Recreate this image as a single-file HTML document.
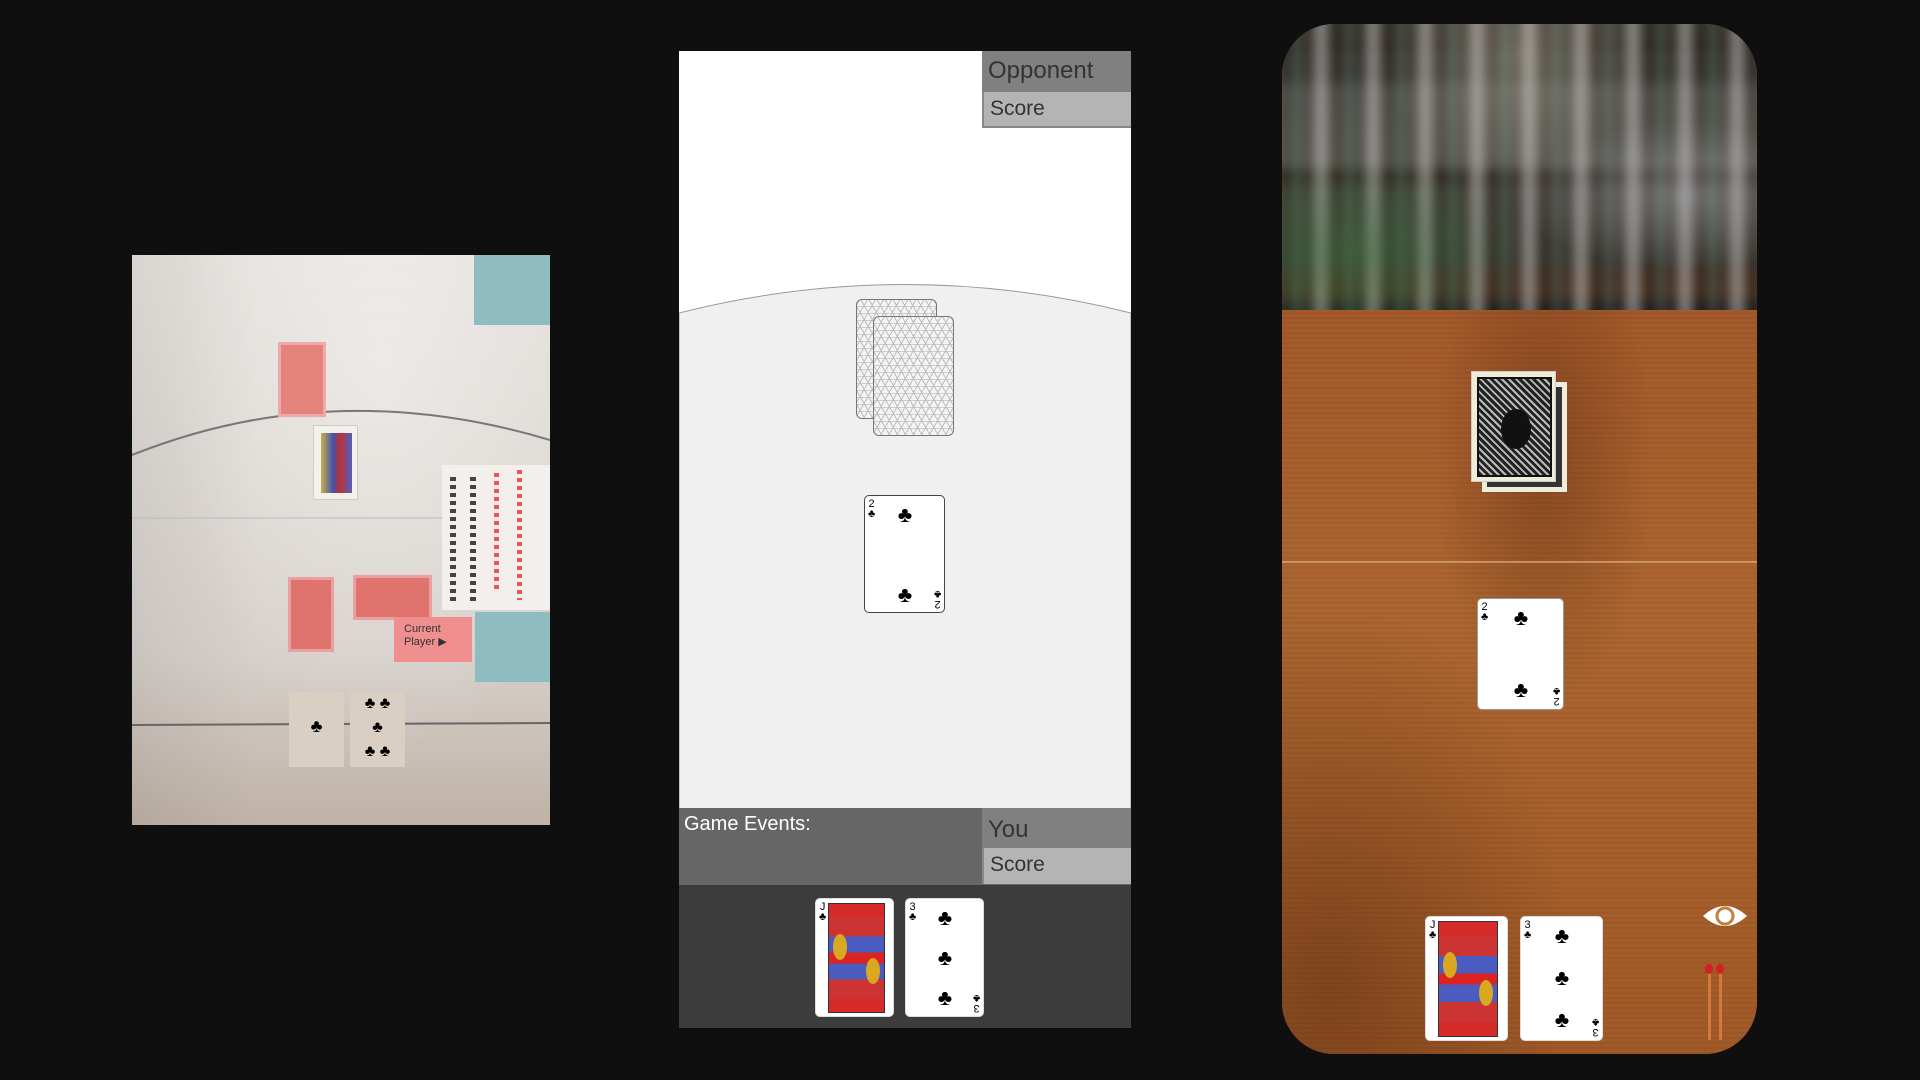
<!DOCTYPE html>
<html><head><meta charset="utf-8"><style>
*{margin:0;padding:0;box-sizing:border-box}
body{width:1920px;height:1080px;background:#0f0f10;position:relative;overflow:hidden;font-family:"Liberation Sans",sans-serif}
.a{position:absolute}
.card{position:absolute;background:#fff;border:1.5px solid #444;border-radius:5px;overflow:hidden}
.pip{position:absolute;font-size:22px;line-height:1;color:#000;transform:translateX(-50%)}
.idx{position:absolute;font-size:11px;line-height:10px;color:#000;text-align:center}
.back{position:absolute;border:1.5px solid #777;border-radius:6px;background:#f4f4f4;
background-image:repeating-linear-gradient(60deg,transparent 0 6px,#bbb 6px 7px),repeating-linear-gradient(-60deg,transparent 0 6px,#bbb 6px 7px),repeating-linear-gradient(0deg,transparent 0 6px,#ccc 6px 7px)}
</style></head><body>

<!-- LEFT: paper prototype photo -->
<div class="a" style="left:132px;top:255px;width:418px;height:570px;overflow:hidden;background:linear-gradient(180deg,#e6e2de 0%,#ded9d4 40%,#d6d0cb 70%,#bfb2a6 100%)">
  <div class="a" style="left:0;top:0;width:418px;height:570px;background:radial-gradient(ellipse at 60% 20%,rgba(255,255,255,.35),transparent 60%),linear-gradient(90deg,rgba(0,0,0,.06),transparent 30%)"></div>
  <svg class="a" style="left:0;top:0" width="418" height="570"><path d="M0 200 Q 200 120 418 185" fill="none" stroke="#777" stroke-width="2"/><line x1="0" y1="263" x2="418" y2="263" stroke="#bbb" stroke-width="1"/><line x1="0" y1="470" x2="418" y2="468" stroke="#666" stroke-width="2"/></svg>
  <div class="a" style="left:342px;top:0;width:76px;height:70px;background:#8fbcc0"></div>
  <div class="a" style="left:146px;top:87px;width:48px;height:75px;background:#e4837c;border:3px solid #eaa"></div>
  <div class="a" style="left:181px;top:170px;width:45px;height:75px;background:#f4f0ea;border:1px solid #ccc"><div class="a" style="left:7px;top:7px;width:31px;height:60px;background:linear-gradient(90deg,#c9b04a,#4050b0 40%,#c03030 60%,#5060c0)"></div></div>
  <div class="a" style="left:156px;top:322px;width:46px;height:75px;background:#e0736e;border:3px solid #e9a0a0"></div>
  <div class="a" style="left:221px;top:320px;width:79px;height:45px;background:#e0736e;border:3px solid #e9a0a0"></div>
  <div class="a" style="left:310px;top:210px;width:108px;height:145px;background:#f2efec"></div>
  <div class="a" style="left:318px;top:222px;width:6px;height:125px;background:repeating-linear-gradient(180deg,#444 0 4px,transparent 4px 8px)"></div>
  <div class="a" style="left:338px;top:222px;width:6px;height:125px;background:repeating-linear-gradient(180deg,#444 0 4px,transparent 4px 8px)"></div>
  <div class="a" style="left:362px;top:218px;width:5px;height:120px;background:repeating-linear-gradient(180deg,#e55 0 4px,transparent 4px 8px)"></div>
  <div class="a" style="left:385px;top:215px;width:5px;height:130px;background:repeating-linear-gradient(180deg,#e55 0 4px,transparent 4px 8px)"></div>
  <div class="a" style="left:262px;top:362px;width:78px;height:45px;background:#ef8f8f;font-size:11px;color:#333;padding:6px 0 0 10px">Current<br>Player ▶</div>
  <div class="a" style="left:343px;top:357px;width:75px;height:70px;background:#8fbcc0"></div>
  <div class="a" style="left:157px;top:437px;width:55px;height:75px;background:#d9cfc3;font-size:18px;text-align:center;padding-top:24px">♣</div>
  <div class="a" style="left:218px;top:437px;width:55px;height:75px;background:#d9cfc3;font-size:16px;text-align:center;line-height:24px">♣ ♣<br>♣<br>♣ ♣</div>
</div>

<!-- MIDDLE -->
<div class="a" style="left:679px;top:51px;width:452px;height:977px;background:#fff;overflow:hidden">
  <svg class="a" style="left:0;top:0" width="452" height="760"><path d="M0 262 Q 226 205 452 262 L452 760 L0 760Z" fill="#f0f0f0" stroke="#999" stroke-width="1"/></svg>
  <div class="a" style="left:303px;top:0;width:149px;height:41px;background:#808080;color:#333;font-size:24px;padding:6px 0 0 6px">Opponent</div>
  <div class="a" style="left:303px;top:41px;width:149px;height:36px;background:#b4b4b4;color:#333;font-size:21px;padding:5px 0 0 6px;border-left:2px solid #888;border-bottom:2px solid #888">Score</div>
  <div class="back" style="left:177px;top:248px;width:81px;height:120px"></div>
  <div class="back" style="left:194px;top:265px;width:81px;height:120px"></div>
  <div class="card" style="left:185px;top:444px;width:81px;height:118px"><div class="idx" style="left:3px;top:3px">2<br>♣</div><div class="pip" style="left:40px;top:8px">♣</div><div class="pip" style="left:40px;top:88px">♣</div><div class="idx" style="right:3px;bottom:3px;transform:rotate(180deg)">2<br>♣</div></div>
  <div class="a" style="left:0;top:757px;width:452px;height:77px;background:#666"></div>
  <div class="a" style="left:5px;top:762px;color:#fff;font-size:20px">Game Events:</div>
  <div class="a" style="left:303px;top:757px;width:149px;height:40px;background:#808080;color:#333;font-size:24px;padding:8px 0 0 6px">You</div>
  <div class="a" style="left:303px;top:797px;width:149px;height:36px;background:#b4b4b4;color:#333;font-size:21px;padding:5px 0 0 6px;border-left:2px solid #888">Score</div>
  <div class="a" style="left:0;top:834px;width:452px;height:143px;background:#3c3c3c"></div>
  <div class="card" style="left:136px;top:847px;width:79px;height:119px;border-color:#ddd"><div class="idx" style="left:3px;top:3px">J<br>♣</div><div class="a" style="left:12px;top:4px;width:57px;height:110px;border:1px solid #333;background:linear-gradient(180deg,#d62a2a 0 12%,#c33 12% 30%,#4a5cc0 30% 45%,#d22 45% 55%,#4a5cc0 55% 70%,#c33 70% 88%,#d62a2a 88%)"><div class="a" style="left:4px;top:30px;width:14px;height:26px;background:#d9a820;border-radius:50%"></div><div class="a" style="right:4px;top:54px;width:14px;height:26px;background:#d9a820;border-radius:50%"></div></div></div>
  <div class="card" style="left:226px;top:847px;width:79px;height:119px;border-color:#ddd"><div class="idx" style="left:3px;top:3px">3<br>♣</div><div class="pip" style="left:39px;top:8px">♣</div><div class="pip" style="left:39px;top:48px">♣</div><div class="pip" style="left:39px;top:88px">♣</div><div class="idx" style="right:3px;bottom:3px;transform:rotate(180deg)">3<br>♣</div></div>
</div>

<!-- RIGHT -->
<div class="a" style="left:1282px;top:24px;width:475px;height:1030px;border-radius:52px;overflow:hidden;background:#a45c24">
  <div class="a" style="left:0;top:0;width:475px;height:286px;background:linear-gradient(180deg,#2a2520 0%,#3a342c 50%,#2c241e 100%);overflow:hidden">
    <div class="a" style="left:-20px;top:-20px;width:520px;height:330px;filter:blur(6px);
    background:
    repeating-linear-gradient(90deg,rgba(220,225,225,.55) 0 14px,transparent 14px 30px,rgba(120,160,150,.4) 30px 40px,transparent 40px 52px),
    linear-gradient(180deg,transparent 0 10%,#2a1f18 10% 14%,transparent 14% 24%,rgba(255,255,255,.1) 24% 50%,#2a1f18 50% 55%,transparent 55% 80%,#3a2518 80% 90%,#1a1410 90%);"></div>
    <div class="a" style="left:0;top:0;width:475px;height:286px;background:radial-gradient(ellipse at 15% 80%,rgba(60,120,60,.5),transparent 30%),radial-gradient(ellipse at 85% 60%,rgba(200,200,210,.35),transparent 30%),radial-gradient(ellipse at 50% 10%,rgba(230,220,200,.3),transparent 40%)"></div>
  </div>
  <div class="a" style="left:0;top:286px;width:475px;height:744px;background:
  radial-gradient(ellipse at 55% 20%,rgba(70,30,10,.35),transparent 30%),
  radial-gradient(ellipse at 10% 90%,rgba(60,25,8,.35),transparent 40%),
  repeating-linear-gradient(0deg,rgba(0,0,0,.05) 0 2px,transparent 2px 5px),
  linear-gradient(180deg,#a4592a 0%,#ad6630 40%,#a15a27 100%)"></div>
  <div class="a" style="left:0;top:537px;width:475px;height:2px;background:rgba(230,180,140,.6)"></div>
  <div class="a" style="left:200px;top:358px;width:85px;height:110px;background:#f0ecdc"><div class="a" style="left:5px;top:5px;width:75px;height:100px;background:#333"></div></div>
  <div class="a" style="left:189px;top:347px;width:85px;height:111px;background:#f0ecdc;border:1px solid #ccc"><div class="a" style="left:5px;top:5px;width:75px;height:100px;background:repeating-linear-gradient(45deg,#222 0 3px,#bbb 3px 5px);border:2px solid #111"><div class="a" style="left:22px;top:30px;width:30px;height:40px;background:#111;border-radius:50%"></div></div></div>
  <div class="card" style="left:195px;top:574px;width:87px;height:112px;border-color:#999"><div class="idx" style="left:3px;top:3px">2<br>♣</div><div class="pip" style="left:43px;top:8px">♣</div><div class="pip" style="left:43px;top:80px">♣</div><div class="idx" style="right:3px;bottom:3px;transform:rotate(180deg)">2<br>♣</div></div>
  <div class="card" style="left:143px;top:892px;width:83px;height:125px;border-color:#ddd"><div class="idx" style="left:3px;top:3px">J<br>♣</div><div class="a" style="left:12px;top:4px;width:60px;height:116px;border:1px solid #333;background:linear-gradient(180deg,#d62a2a 0 12%,#c33 12% 30%,#4a5cc0 30% 45%,#d22 45% 55%,#4a5cc0 55% 70%,#c33 70% 88%,#d62a2a 88%)"><div class="a" style="left:4px;top:30px;width:14px;height:26px;background:#d9a820;border-radius:50%"></div><div class="a" style="right:4px;top:58px;width:14px;height:26px;background:#d9a820;border-radius:50%"></div></div></div>
  <div class="card" style="left:238px;top:892px;width:83px;height:125px;border-color:#ddd"><div class="idx" style="left:3px;top:3px">3<br>♣</div><div class="pip" style="left:41px;top:8px">♣</div><div class="pip" style="left:41px;top:50px">♣</div><div class="pip" style="left:41px;top:92px">♣</div><div class="idx" style="right:3px;bottom:3px;transform:rotate(180deg)">3<br>♣</div></div>
  <svg class="a" style="left:418px;top:874px" width="50" height="36"><path d="M3 18 Q25 -2 47 18 Q25 38 3 18Z" fill="#fff"/><circle cx="25" cy="18" r="8" fill="none" stroke="#c08040" stroke-width="3"/></svg>
  <div class="a" style="left:426px;top:946px;width:3px;height:70px;background:#d07a40"></div>
  <div class="a" style="left:423px;top:940px;width:8px;height:10px;background:#d02020;border-radius:50%"></div>
  <div class="a" style="left:437px;top:946px;width:3px;height:70px;background:#d07a40"></div>
  <div class="a" style="left:434px;top:940px;width:8px;height:10px;background:#d02020;border-radius:50%"></div>
</div>
</body></html>
